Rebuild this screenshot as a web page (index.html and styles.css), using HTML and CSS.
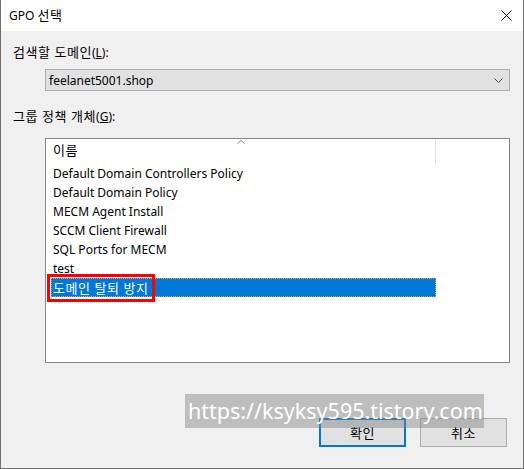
FILE: index.html
```html
<!DOCTYPE html>
<html lang="ko">
<head>
<meta charset="utf-8">
<title>GPO 선택</title>
<link rel="stylesheet" href="styles.css">
</head>
<body>
<div class="window">
  <div class="titlebar">
    <span class="title">GPO <span class="ko">선택</span></span>
    <svg class="close" width="11" height="11" viewBox="0 0 11 11"><path d="M0.5 0.5 L10.5 10.5 M10.5 0.5 L0.5 10.5" stroke="#000" stroke-width="1" fill="none"/></svg>
  </div>
  <div class="content">
    <div class="label"><span class="ko">검색할 도메인</span>(<u>L</u>):</div>
    <div class="combo">
      <span>feelanet5001.shop</span>
      <svg class="chev" width="9" height="5" viewBox="0 0 9 5"><path d="M0.5 0.5 L4.5 4.5 L8.5 0.5" stroke="#444" stroke-width="1" fill="none"/></svg>
    </div>
    <div class="label label2"><span class="ko">그룹 정책 개체</span>(<u>G</u>):</div>
    <div class="listbox">
      <div class="header">
        <div class="hcell"><span class="ko">이름</span>
          <svg class="sort" width="8" height="4" viewBox="0 0 8 4"><path d="M0.5 3.5 L4 0.5 L7.5 3.5" stroke="#888" stroke-width="1" fill="none"/></svg>
        </div>
      </div>
      <div class="rows">
        <div class="row">Default Domain Controllers Policy</div>
        <div class="row">Default Domain Policy</div>
        <div class="row">MECM Agent Install</div>
        <div class="row">SCCM Client Firewall</div>
        <div class="row">SQL Ports for MECM</div>
        <div class="row">test</div>
        <div class="row selected"><span class="mark ko">도메인 탈퇴 방지</span></div>
      </div>
    </div>
    <div class="buttons">
      <div class="btn default"><span class="ko">확인</span></div>
      <div class="btn"><span class="ko">취소</span></div>
    </div>
  </div>
  <div class="watermark">https://ksyksy595.tistory.com</div>
</div>
</body>
</html>
```
FILE: styles.css
```css
* { box-sizing: border-box; }
html, body { margin: 0; padding: 0; }
body {
  width: 524px;
  height: 469px;
  background: #f0f0f0;
  font-family: "Segoe UI", "Noto Sans", "Noto Sans CJK KR", sans-serif;
  font-size: 12px;
  color: #000;
}
.ko {
  font-family: "Noto Sans CJK KR", sans-serif;
  font-size: 13px;
  letter-spacing: 0.5px;
}
.window {
  position: relative;
  width: 524px;
  height: 469px;
  border: 1px solid #707070;
  border-top: none;
  background: #f0f0f0;
  display: flex;
  flex-direction: column;
}
.titlebar {
  height: 31px;
  background: #fff;
  display: flex;
  align-items: center;
  justify-content: space-between;
  padding: 0 11px 0 8px;
}
.title { font-size: 12px; line-height: 16px; }
.content {
  flex: 1;
  padding: 13px 13px 0 12px;
  display: flex;
  flex-direction: column;
}
.label { line-height: 16px; height: 16px; }
.label u { text-decoration: underline; }
.combo {
  margin: 9px 0 0 32px;
  width: 465px;
  height: 22px;
  background: #e1e1e1;
  border: 1px solid #adadad;
  display: flex;
  align-items: center;
  justify-content: space-between;
  padding: 0 6px 0 3px;
}
.label2 { margin-top: 17px; }
.listbox {
  margin: 14px 0 0 32px;
  width: 465px;
  height: 225px;
  background: #fff;
  border: 1px solid #828790;
}
.header { height: 25px; display: flex; }
.hcell {
  position: relative;
  width: 390px;
  height: 24px;
  margin-top: 1px;
  border-right: 1px solid #e5e5e5;
  padding: 1px 0 0 7px;
  line-height: 18px;
}
.sort { position: absolute; left: 191px; top: 0; }
.rows { padding: 0 0 0 5px; }
.row {
  height: 19px;
  line-height: 19px;
  padding-left: 2px;
  width: 385px;
}
.row.selected {
  background: #0078d7;
  color: #fff;
  outline: 1px dotted #e8a040;
  outline-offset: -1px;
  position: relative;
}
.mark {
  position: relative;
  display: inline-block;
  line-height: 19px;
}
.mark::after {
  content: "";
  position: absolute;
  left: -6px;
  top: -4px;
  right: -6px;
  bottom: -5px;
  border: 3px solid #ff0000;
}
.buttons {
  margin-top: 55px;
  display: flex;
  justify-content: flex-end;
  gap: 14px;
  padding-right: 3px;
}
.btn {
  width: 87px;
  height: 29px;
  background: #e1e1e1;
  border: 1px solid #adadad;
  display: flex;
  align-items: center;
  justify-content: center;
}
.btn.default { border: 2px solid #0078d7; }
.watermark {
  position: absolute;
  left: 184px;
  top: 394px;
  width: 299px;
  height: 34px;
  background: rgba(128, 128, 128, 0.45);
  color: #fff;
  font-size: 21.5px;
  line-height: 34px;
  padding-left: 3px;
  white-space: nowrap;
  font-family: "Segoe UI", "Noto Sans", sans-serif;
}
```
